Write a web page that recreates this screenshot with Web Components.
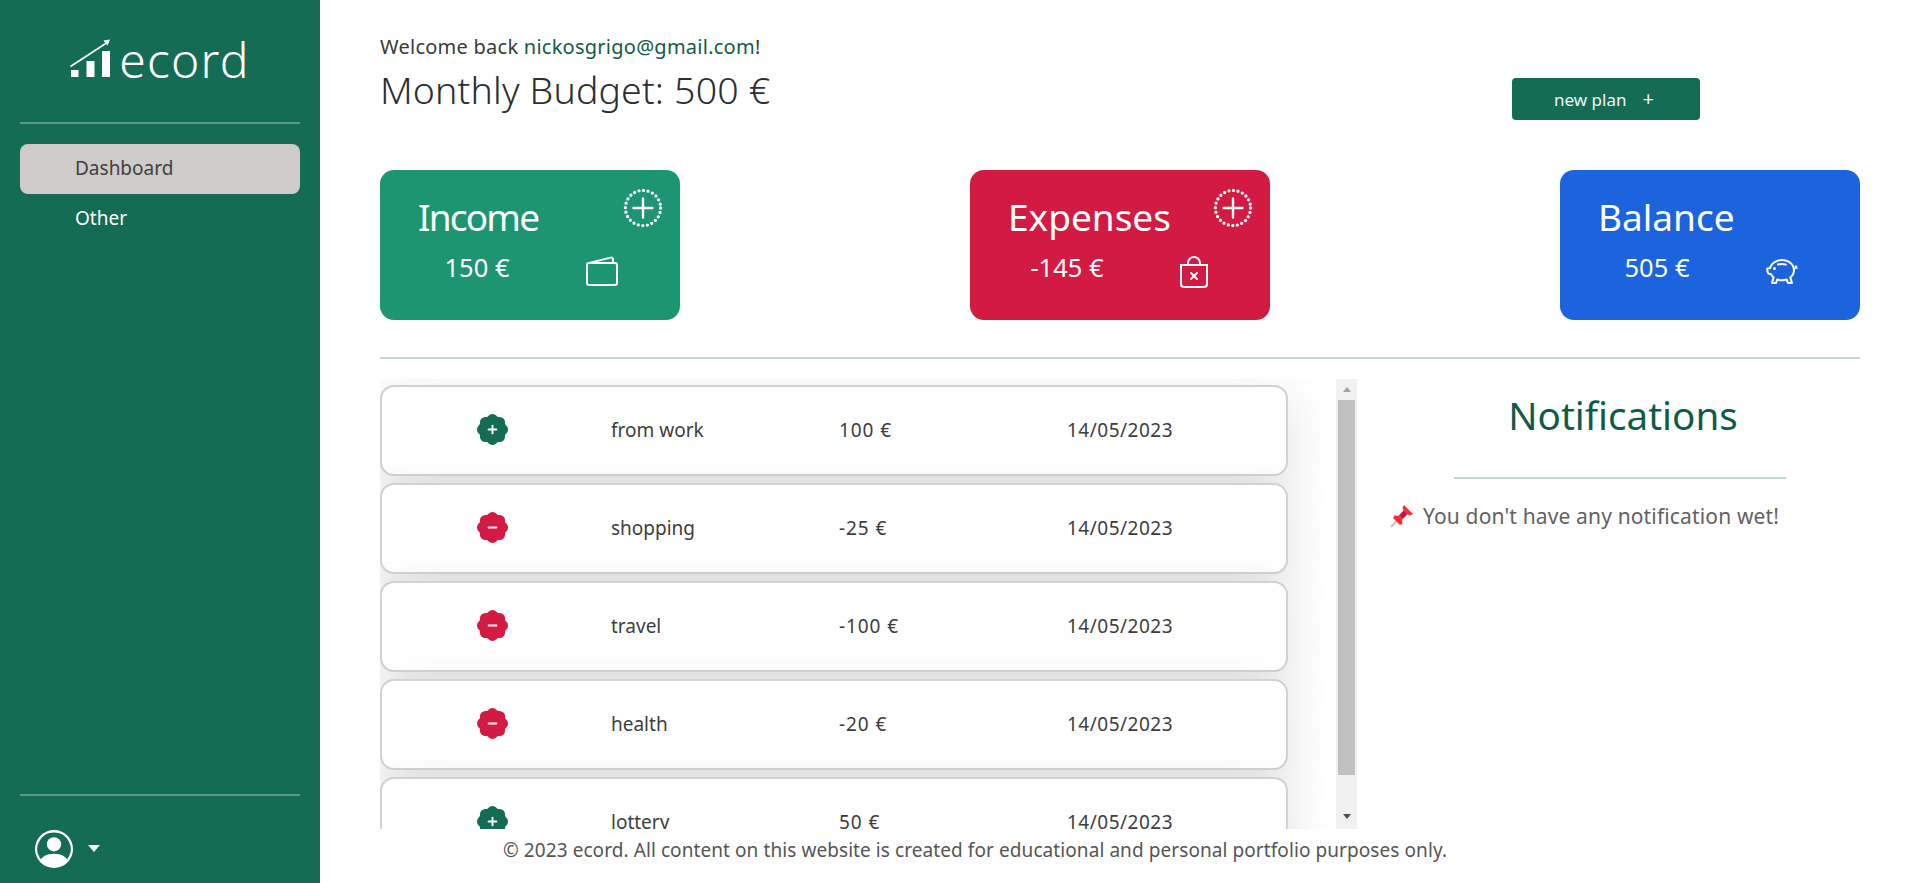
<!DOCTYPE html>
<html lang="en">
<head>
<meta charset="utf-8">
<title>ecord</title>
<style>
  html,body{margin:0;height:100%;overflow:hidden;background:#fff}
  body{font-family:"Noto Sans","Lato",sans-serif;color:#333}
</style>
</head>
<body>
<ecord-app></ecord-app>

<script>
// small icon set (16x16 viewbox)
const ICONS = {
  wallet: '<path d="M12.136.326A1.5 1.5 0 0 1 14 1.78V3h.5A1.5 1.5 0 0 1 16 4.5v9a1.5 1.5 0 0 1-1.5 1.5h-13A1.5 1.5 0 0 1 0 13.5v-9a1.5 1.5 0 0 1 1.432-1.499L12.136.326zM5.562 3H13V1.78a.5.5 0 0 0-.621-.484L5.562 3zM1.5 4a.5.5 0 0 0-.5.5v9a.5.5 0 0 0 .5.5h13a.5.5 0 0 0 .5-.5v-9a.5.5 0 0 0-.5-.5h-13z"/>',
  bag: '<path d="M6.146 8.146a.5.5 0 0 1 .708 0L8 9.293l1.146-1.147a.5.5 0 1 1 .708.708L8.707 10l1.147 1.146a.5.5 0 0 1-.708.708L8 10.707l-1.146 1.147a.5.5 0 0 1-.708-.708L7.293 10 6.146 8.854a.5.5 0 0 1 0-.708z"/><path d="M8 1a2.5 2.5 0 0 1 2.5 2.5V4h-5v-.5A2.5 2.5 0 0 1 8 1zm3.5 3v-.5a3.5 3.5 0 1 0-7 0V4H1v10a2 2 0 0 0 2 2h10a2 2 0 0 0 2-2V4h-3.5zM2 5h12v9a1 1 0 0 1-1 1H3a1 1 0 0 1-1-1V5z"/>',
  piggy: '<path d="M5 6.25a.75.75 0 1 1-1.5 0 .75.75 0 0 1 1.5 0zm1.138-1.496A6.613 6.613 0 0 1 7.964 4.5c.666 0 1.303.097 1.893.273a.5.5 0 0 0 .286-.958A7.602 7.602 0 0 0 7.964 3.5c-.734 0-1.441.103-2.102.292a.5.5 0 1 0 .276.962z"/><path fill-rule="evenodd" d="M7.964 1.527c-2.977 0-5.571 1.704-6.32 4.125h-.55A1 1 0 0 0 .11 6.824l.254 1.46a1.5 1.5 0 0 0 1.478 1.243h.263c.3.513.688.978 1.145 1.382l-.729 2.477a.5.5 0 0 0 .48.641h2a.5.5 0 0 0 .471-.332l.482-1.351c.635.173 1.31.267 2.011.267.707 0 1.388-.095 2.028-.272l.543 1.372a.5.5 0 0 0 .465.316h2a.5.5 0 0 0 .478-.645l-.761-2.506C13.81 9.895 14.5 8.559 14.5 7.069c0-.145-.007-.29-.02-.431.261-.11.508-.266.705-.444.315.306.815.306.815-.417 0 .223-.5.223-.461-.026a.95.95 0 0 0 .09-.255.7.7 0 0 0-.202-.645.58.58 0 0 0-.707-.098.735.735 0 0 0-.375.562c-.024.243.082.48.32.654a2.112 2.112 0 0 1-.259.153c-.534-2.664-3.284-4.595-6.442-4.595zM2.516 6.26c.455-2.066 2.667-3.733 5.448-3.733 3.146 0 5.536 2.114 5.536 4.542 0 1.254-.624 2.41-1.67 3.248a.5.5 0 0 0-.165.535l.66 2.175h-.985l-.59-1.487a.5.5 0 0 0-.629-.288c-.661.23-1.39.359-2.157.359a6.558 6.558 0 0 1-2.157-.359.5.5 0 0 0-.635.304l-.525 1.471h-.979l.633-2.15a.5.5 0 0 0-.17-.534 4.649 4.649 0 0 1-1.284-1.541.5.5 0 0 0-.446-.275h-.56a.5.5 0 0 1-.492-.414l-.254-1.46h.933a.5.5 0 0 0 .488-.393zm12.621-.857a.565.565 0 0 1-.098.21.704.704 0 0 1-.044-.025c-.146-.09-.157-.175-.152-.223a.236.236 0 0 1 .117-.173c.049-.027.08-.021.113.012a.202.202 0 0 1 .064.199z"/>',
  patchPlus: '<path d="M10.067.87a2.89 2.89 0 0 0-4.134 0l-.622.638-.89-.011a2.89 2.89 0 0 0-2.924 2.924l.01.89-.636.622a2.89 2.89 0 0 0 0 4.134l.637.622-.011.89a2.89 2.89 0 0 0 2.924 2.924l.89-.01.622.636a2.89 2.89 0 0 0 4.134 0l.622-.637.89.011a2.89 2.89 0 0 0 2.924-2.924l-.01-.89.636-.622a2.89 2.89 0 0 0 0-4.134l-.637-.622.011-.89a2.89 2.89 0 0 0-2.924-2.924l-.89.01-.622-.636zM8.5 6v1.5H10a.5.5 0 0 1 0 1H8.5V10a.5.5 0 0 1-1 0V8.5H6a.5.5 0 0 1 0-1h1.5V6a.5.5 0 0 1 1 0z"/>',
  patchMinus: '<path d="M10.067.87a2.89 2.89 0 0 0-4.134 0l-.622.638-.89-.011a2.89 2.89 0 0 0-2.924 2.924l.01.89-.636.622a2.89 2.89 0 0 0 0 4.134l.637.622-.011.89a2.89 2.89 0 0 0 2.924 2.924l.89-.01.622.636a2.89 2.89 0 0 0 4.134 0l.622-.637.89.011a2.89 2.89 0 0 0 2.924-2.924l-.01-.89.636-.622a2.89 2.89 0 0 0 0-4.134l-.637-.622.011-.89a2.89 2.89 0 0 0-2.924-2.924l-.89.01-.622-.636zM6 7.5h4a.5.5 0 0 1 0 1H6a.5.5 0 0 1 0-1z"/>',
  person: '<path d="M11 6a3 3 0 1 1-6 0 3 3 0 0 1 6 0z"/><path fill-rule="evenodd" d="M0 8a8 8 0 1 1 16 0A8 8 0 0 1 0 8zm8-7a7 7 0 0 0-5.468 11.37C3.242 11.226 4.805 10 8 10s4.757 1.225 5.468 2.37A7 7 0 0 0 8 1z"/>'
};
const icon = (name, size) => `<svg width="${size}" height="${size}" viewBox="0 0 16 16" fill="currentColor" style="display:block">${ICONS[name]}</svg>`;

customElements.define('app-sidebar', class extends HTMLElement {
  connectedCallback(){
    this.attachShadow({mode:'open'}).innerHTML = `
      <style>
        :host{display:flex;flex-direction:column;width:320px;height:883px;flex:none;background:#146c54;color:#fff;box-sizing:border-box;padding:0 20px}
        .logo{display:flex;align-items:flex-end;justify-content:center;height:122px;box-sizing:border-box;padding:0 0 43px 0;gap:7px}
        .logo span{font-size:48px;font-weight:300;line-height:48px;margin-bottom:-5px;letter-spacing:1.2px}
        hr{border:0;height:2px;background:#5c9987;margin:0}
        nav{flex:1;padding-top:20px}
        .item{display:block;height:50px;line-height:49px;padding-left:55px;font-size:19px;border-radius:8px}
        .item.on{background:#cfcbcb;color:#403f42}
        .user{display:flex;align-items:center;gap:15px;height:87px;padding:18px 0 0 15px;box-sizing:border-box}
        .caret{width:0;height:0;border:6px solid transparent;border-top:7px solid #fff;border-bottom:0}
      </style>
      <div class="logo">
        <svg width="42" height="40" viewBox="0 0 42 40" fill="#fff">
          <rect x="1" y="31" width="7.5" height="7"/><rect x="16.5" y="22" width="8" height="16"/><rect x="32" y="12" width="8" height="26"/>
          <path d="M0.5 27.5 L38 3" stroke="#fff" stroke-width="1.6"/><path d="M40 0.5 L33.5 1.5 L37.5 6.5z"/>
        </svg>
        <span>ecord</span>
      </div>
      <hr>
      <nav><span class="item on">Dashboard</span><span class="item">Other</span></nav>
      <hr>
      <div class="user">${icon('person',38)}<i class="caret"></i></div>`;
  }
});

customElements.define('budget-header', class extends HTMLElement {
  connectedCallback(){
    this.attachShadow({mode:'open'}).innerHTML = `
      <style>
        :host{display:flex;justify-content:space-between;align-items:flex-start;height:170px;box-sizing:border-box;padding-top:33px}
        p{margin:0;font-size:20px;line-height:28px;color:#3a3a3a;letter-spacing:.25px}
        a{color:#0f5c46;text-decoration:none}
        h1{margin:9px 0 0;font-size:37.5px;font-weight:300;line-height:40px;color:#2b2e33;letter-spacing:.15px}
        button{margin:45px 160px 0 0;width:188px;height:42px;border:0;border-radius:4px;background:#146c54;color:#f1f7f5;font:inherit;font-size:17px;display:flex;align-items:center;justify-content:center;gap:16px;padding:0 4px 0 0}
        button span{font-size:20px;line-height:20px}
      </style>
      <div>
        <p>Welcome back <a>nickosgrigo@gmail.com</a>!</p>
        <h1>Monthly Budget: 500 €</h1>
      </div>
      <button>new plan <span>+</span></button>`;
  }
});

customElements.define('summary-card', class extends HTMLElement {
  connectedCallback(){
    const addable = this.hasAttribute('addable');
    this.attachShadow({mode:'open'}).innerHTML = `
      <style>
        :host{display:block;position:relative;width:300px;height:150px;border-radius:14px;color:#fff;box-sizing:border-box;padding:24px 0 0 38px}
        h2{margin:0;font-size:37px;font-weight:400;line-height:46px}
        .val{font-size:25.5px;line-height:36px;text-align:center}
        .ico{display:flex;justify-content:center;margin:8.5px 0 0 0}
        .add{position:absolute;top:18px;right:17px}
        .wrap{display:grid;grid-template-columns:194px 56px;margin:7px 0 0 -38px;align-items:center}
      </style>
      <h2><slot name="title"></slot></h2>
      <div class="wrap">
        <div class="val"><slot name="value"></slot></div>
        <div class="ico"><slot name="icon"></slot></div>
      </div>
      ${addable ? `<svg class="add" width="40" height="40" viewBox="0 0 40 40" fill="none" stroke="#fff">
        <circle cx="20" cy="20" r="17.6" stroke-width="3.3" stroke-linecap="round" stroke-dasharray="0 4.607"/>
        <path d="M20 10.5v19M10.5 20h19" stroke-width="2.4" stroke-linecap="round"/></svg>` : ''}`;
  }
});

customElements.define('tx-row', class extends HTMLElement {
  connectedCallback(){
    const plus = this.getAttribute('type') === 'in';
    this.attachShadow({mode:'open'}).innerHTML = `
      <style>
        :host{display:grid;grid-template-columns:229px 228px 228px 1fr;align-items:center;width:908px;height:91px;box-sizing:border-box;border:2px solid #d2d2d2;border-radius:14px;background:#fff;box-shadow:0 16px 48px rgba(100,100,111,.2);font-size:19px;color:#3d3d3d;flex:none;padding-bottom:2px}
        .badge{margin-left:95px;color:${plus ? '#146c54' : '#d21a43'}}
        .amt{letter-spacing:.9px}
        .date{letter-spacing:.5px}
      </style>
      <div class="badge">${icon(plus ? 'patchPlus' : 'patchMinus', 31)}</div>
      <div>${this.getAttribute('label')}</div>
      <div class="amt">${this.getAttribute('amount')}</div>
      <div class="date">${this.getAttribute('date')}</div>`;
  }
});

customElements.define('tx-list', class extends HTMLElement {
  connectedCallback(){
    this.attachShadow({mode:'open'}).innerHTML = `
      <style>
        :host{display:flex;width:977px;height:450px;flex:none}
        .view{flex:1;min-width:0;overflow:hidden;display:flex;flex-direction:column;gap:7px;padding-top:6px;box-sizing:border-box}
        .bar{display:flex;flex-direction:column;width:21px;flex:none;background:#f1f1f1}
        .arrow{height:21px;flex:none;display:flex;align-items:center;justify-content:center;box-sizing:border-box}
        .arrow i{width:0;height:0;border:solid transparent;border-width:0 4.5px}
        .up i{border-bottom:5px solid #a3a3a3}
        .down{padding-bottom:5px}
        .down i{border-top:5px solid #505050}
        .thumb{height:375px;margin:0 2px;background:#c1c1c1;flex:none}
        .track{flex:1}
      </style>
      <div class="view"><slot></slot></div>
      <div class="bar">
        <div class="arrow up"><i></i></div>
        <div class="thumb"></div>
        <div class="track"></div>
        <div class="arrow down"><i></i></div>
      </div>`;
  }
});

customElements.define('notif-panel', class extends HTMLElement {
  connectedCallback(){
    this.attachShadow({mode:'open'}).innerHTML = `
      <style>
        :host{display:block;flex:1;box-sizing:border-box;padding-top:10px}
        h2{margin:0;padding-left:29px;text-align:center;font-size:38.6px;font-weight:400;line-height:52px;color:#0f5c46}
        hr{border:0;height:2px;background:#bfdcd4;width:332px;margin:36px 0 0 97px}
        .msg{display:flex;align-items:center;gap:9px;margin:22px 0 0 33px;font-size:21px;line-height:30px;color:#655f5f;white-space:nowrap;letter-spacing:.15px}
      </style>
      <h2>Notifications</h2>
      <hr>
      <div class="msg">
        <svg width="24" height="24" viewBox="0 0 24 24">
          <path d="M1 23 L9 14" stroke="#c8c8c8" stroke-width="2"/>
          <path d="M14 1 L23 10 L20 11.5 L17 10.5 L12 16 L12.5 19.5 L10 21 L3 14 L4.5 11.5 L8 12 L13.5 6.8 L12.5 3.5z" fill="#f8302f"/>
          <path d="M10 11 L13.5 7 L17 10.5 L13 14.5z" fill="#b6134f"/>
        </svg>
        <span>You don't have any notification wet!</span>
      </div>`;
  }
});

customElements.define('page-footer', class extends HTMLElement {
  connectedCallback(){
    this.attachShadow({mode:'open'}).innerHTML = `
      <style>
        :host{display:block;text-align:center;font-size:19px;line-height:42px;color:#555;width:1190px;letter-spacing:.08px;white-space:nowrap}
      </style>
      <slot></slot>`;
  }
});

customElements.define('ecord-app', class extends HTMLElement {
  connectedCallback(){
    this.attachShadow({mode:'open'}).innerHTML = `
      <style>
        :host{display:flex;width:1920px;height:883px;overflow:hidden}
        main{flex:1;min-width:0;padding:0 60px;box-sizing:border-box}
        .cards{display:flex;justify-content:space-between}
        .income{background:#1c9570}.expenses{background:#d21a43}.balance{background:#1c63de}
        hr{border:0;height:2px;background:#bfdcd4;margin:37px 0 20px}
        .content{display:flex}
        [slot=icon]{display:block}
        .tight{letter-spacing:-1.8px}
        .nudge{margin-left:4px}
      </style>
      <app-sidebar></app-sidebar>
      <main>
        <budget-header></budget-header>
        <div class="cards">
          <summary-card class="income" addable>
            <span slot="title" class="tight">Income</span><span slot="value">150 €</span>
            <span slot="icon">${icon('wallet',32)}</span>
          </summary-card>
          <summary-card class="expenses" addable>
            <span slot="title">Expenses</span><span slot="value">-145 €</span>
            <span slot="icon" class="nudge">${icon('bag',32)}</span>
          </summary-card>
          <summary-card class="balance">
            <span slot="title">Balance</span><span slot="value">505 €</span>
            <span slot="icon">${icon('piggy',32)}</span>
          </summary-card>
        </div>
        <hr>
        <div class="content">
          <tx-list>
            <tx-row type="in" label="from work" amount="100 €" date="14/05/2023"></tx-row>
            <tx-row type="out" label="shopping" amount="-25 €" date="14/05/2023"></tx-row>
            <tx-row type="out" label="travel" amount="-100 €" date="14/05/2023"></tx-row>
            <tx-row type="out" label="health" amount="-20 €" date="14/05/2023"></tx-row>
            <tx-row type="in" label="lottery" amount="50 €" date="14/05/2023"></tx-row>
          </tx-list>
          <notif-panel></notif-panel>
        </div>
        <page-footer>© 2023 ecord. All content on this website is created for educational and personal portfolio purposes only.</page-footer>
      </main>`;
  }
});
</script>
</body>
</html>
